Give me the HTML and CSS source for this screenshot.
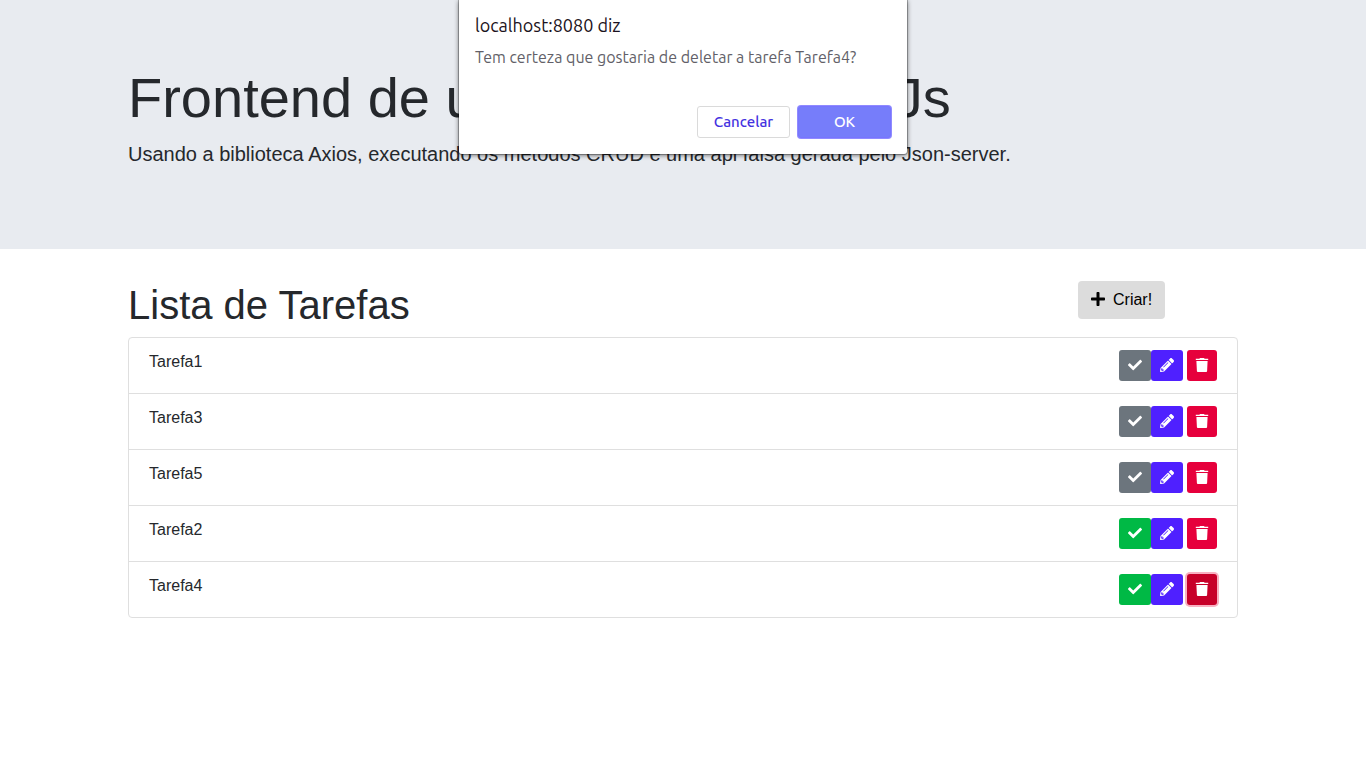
FILE: index.html
```html
<!DOCTYPE html>
<html lang="pt-BR">
<head>
  <meta charset="utf-8">
  <meta name="viewport" content="width=device-width, initial-scale=1">
  <title>Lista de Tarefas</title>
  <link rel="stylesheet" href="styles.css">
</head>
<body>
  <svg class="sprite" aria-hidden="true">
    <symbol id="check" viewBox="0 0 512 512"><path d="M173.898 439.404l-166.4-166.4c-9.997-9.997-9.997-26.206 0-36.204l36.203-36.204c9.997-9.998 26.207-9.998 36.204 0L192 312.69 432.095 72.596c9.997-9.997 26.207-9.997 36.204 0l36.203 36.204c9.997 9.997 9.997 26.206 0 36.204l-294.4 294.401c-9.998 9.997-26.207 9.997-36.204-.001z"/></symbol>
    <symbol id="pencil" viewBox="0 0 512 512"><path d="M497.9 142.1l-46.1 46.1c-4.7 4.7-12.3 4.7-17 0l-111-111c-4.7-4.7-4.7-12.3 0-17l46.1-46.1c18.7-18.7 49.1-18.7 67.9 0l60.1 60.1c18.8 18.7 18.8 49.1 0 67.9zM284.2 99.8L21.6 362.4.4 483.9c-2.9 16.4 11.4 30.6 27.8 27.8l121.5-21.3 262.6-262.6c4.7-4.7 4.7-12.3 0-17l-111-111c-4.8-4.7-12.4-4.7-17.1 0zM124.1 339.9c-5.5-5.5-5.5-14.3 0-19.8l154-154c5.5-5.5 14.3-5.5 19.8 0s5.5 14.3 0 19.8l-154 154c-5.5 5.5-14.3 5.5-19.8 0zM88 424h48v36.3l-64.5 11.3-31.1-31.1L51.7 376H88v48z"/></symbol>
    <symbol id="trash" viewBox="0 0 12 14"><path d="M4 0h4l.6 .8H12.2V2.1H-.2V.8H3.4zM.4 3h11.2l-.5 10a1 1 0 0 1-1 1H1.9a1 1 0 0 1-1-1z"/></symbol>
    <symbol id="plus" viewBox="0 0 448 512"><path d="M416 208H272V64c0-17.67-14.33-32-32-32h-32c-17.67 0-32 14.33-32 32v144H32c-17.67 0-32 14.33-32 32v32c0 17.67 14.33 32 32 32h144v144c0 17.67 14.33 32 32 32h32c17.67 0 32-14.33 32-32V304h144c17.67 0 32-14.33 32-32v-32c0-17.67-14.33-32-32-32z"/></symbol>
  </svg>

  <header class="hero">
    <div class="container">
      <h1 class="hero-title">Frontend de um Crud com VueJs</h1>
      <p class="hero-lead">Usando a biblioteca Axios, executando os métodos CRUD e uma api falsa gerada pelo Json-server.</p>
    </div>
  </header>

  <main class="container">
    <div class="toolbar">
      <h2 class="title">Lista de Tarefas</h2>
      <div>
        <button type="button" class="btn btn-create"><svg class="icon-plus" aria-hidden="true"><use href="#plus"/></svg>Criar!</button>
      </div>
    </div>

    <ul class="tasks">
      <li class="task">
        <span>Tarefa1</span>
        <div class="actions">
          <button type="button" class="btn btn-sm gray" aria-label="Concluir Tarefa1"><svg class="icon"><use href="#check"/></svg></button>
          <button type="button" class="btn btn-sm blue" aria-label="Editar Tarefa1"><svg class="icon"><use href="#pencil"/></svg></button>
          <button type="button" class="btn btn-sm red" aria-label="Deletar Tarefa1"><svg class="icon narrow"><use href="#trash"/></svg></button>
        </div>
      </li>
      <li class="task">
        <span>Tarefa3</span>
        <div class="actions">
          <button type="button" class="btn btn-sm gray" aria-label="Concluir Tarefa3"><svg class="icon"><use href="#check"/></svg></button>
          <button type="button" class="btn btn-sm blue" aria-label="Editar Tarefa3"><svg class="icon"><use href="#pencil"/></svg></button>
          <button type="button" class="btn btn-sm red" aria-label="Deletar Tarefa3"><svg class="icon narrow"><use href="#trash"/></svg></button>
        </div>
      </li>
      <li class="task">
        <span>Tarefa5</span>
        <div class="actions">
          <button type="button" class="btn btn-sm gray" aria-label="Concluir Tarefa5"><svg class="icon"><use href="#check"/></svg></button>
          <button type="button" class="btn btn-sm blue" aria-label="Editar Tarefa5"><svg class="icon"><use href="#pencil"/></svg></button>
          <button type="button" class="btn btn-sm red" aria-label="Deletar Tarefa5"><svg class="icon narrow"><use href="#trash"/></svg></button>
        </div>
      </li>
      <li class="task">
        <span>Tarefa2</span>
        <div class="actions">
          <button type="button" class="btn btn-sm green" aria-label="Reabrir Tarefa2"><svg class="icon"><use href="#check"/></svg></button>
          <button type="button" class="btn btn-sm blue" aria-label="Editar Tarefa2"><svg class="icon"><use href="#pencil"/></svg></button>
          <button type="button" class="btn btn-sm red" aria-label="Deletar Tarefa2"><svg class="icon narrow"><use href="#trash"/></svg></button>
        </div>
      </li>
      <li class="task">
        <span>Tarefa4</span>
        <div class="actions">
          <button type="button" class="btn btn-sm green" aria-label="Reabrir Tarefa4"><svg class="icon"><use href="#check"/></svg></button>
          <button type="button" class="btn btn-sm blue" aria-label="Editar Tarefa4"><svg class="icon"><use href="#pencil"/></svg></button>
          <button type="button" class="btn btn-sm red active" aria-label="Deletar Tarefa4"><svg class="icon narrow"><use href="#trash"/></svg></button>
        </div>
      </li>
    </ul>
  </main>

  <div class="dialog" role="alertdialog" aria-labelledby="dialog-title" aria-describedby="dialog-text">
    <h2 class="dialog-title" id="dialog-title">localhost:8080 diz</h2>
    <p class="dialog-text" id="dialog-text">Tem certeza que gostaria de deletar a tarefa Tarefa4?</p>
    <div class="dialog-actions">
      <button type="button" class="dialog-btn">Cancelar</button>
      <button type="button" class="dialog-btn primary">OK</button>
    </div>
  </div>
</body>
</html>
```
FILE: styles.css
```css
*, *::before, *::after { box-sizing: border-box; }

body {
  margin: 0;
  background: #fff;
  color: #25282c;
  font: 16px/24px "Liberation Sans", Arial, sans-serif;
}

h1, h2, p, ul { margin: 0; padding: 0; font-weight: 400; }

.sprite { display: none; }

.container {
  max-width: 1140px;
  margin: 0 auto;
  padding: 0 15px;
}

.hero { padding: 64px 0 80px; background: #e8ebf0; }
.hero-title { margin-bottom: 8px; font-size: 56px; line-height: 67px; }
.hero-lead { font-size: 20px; line-height: 30px; }

.toolbar {
  display: grid;
  grid-template-columns: 10fr 2fr;
  margin: 32px -15px 8px;
}
.toolbar > * { padding: 0 15px; }
.title { font-size: 40px; line-height: 48px; }

.btn {
  display: flex;
  align-items: center;
  border: 1px solid transparent;
  border-radius: 4px;
  color: #fff;
  font: inherit;
  cursor: pointer;
}
.btn-create { gap: 8px; padding: 6px 12px; background: #dcdcdc; color: #000; }
.icon-plus { width: 14px; height: 16px; margin-bottom: 2px; fill: currentColor; }

.tasks {
  list-style: none;
  border: 1px solid #dfdfdf;
  border-radius: 4px;
}
.task {
  display: flex;
  justify-content: space-between;
  padding: 12px 20px;
}
.task + .task { border-top: 1px solid #dfdfdf; }

.actions { display: flex; }
.btn-sm { height: 31px; padding: 0 8px 1px; border-radius: 3px; }
.icon { display: block; width: 14px; height: 14px; fill: currentColor; }
.narrow { width: 12px; overflow: visible; }
symbol { overflow: visible; }

.gray { background: #6c757d; }
.green { background: #00b945; }
.blue { background: #4f20ff; }
.red { margin-left: 4px; background: #e6003c; }
.red.active { background: #c70029; box-shadow: 0 0 0 2px #f8b0c1; }

.dialog {
  position: absolute;
  top: 0;
  left: 50%;
  width: 448px;
  padding: 12px 16px 16px;
  transform: translateX(-50%);
  border-radius: 0 0 3px 3px;
  background: #fff;
  box-shadow: 0 0 0 1px rgba(0, 0, 0, .25), 0 1px 5px rgba(0, 0, 0, .6);
  font-family: Ubuntu, "Noto Sans", sans-serif;
}
.dialog-title { margin-bottom: 8px; color: #1b1220; font-size: 18px; line-height: 26px; }
.dialog-text { color: #625f68; font-size: 16px; line-height: 22px; }
.dialog-actions { display: flex; justify-content: flex-end; gap: 8px; margin-top: 38px; }
.dialog-btn {
  min-width: 93px;
  height: 32px;
  padding: 0 15px;
  border: 1px solid #dadada;
  border-radius: 3px;
  background: #fff;
  color: #4432df;
  font: 500 15px/20px Ubuntu, "Noto Sans", sans-serif;
  cursor: pointer;
}
.primary { border-color: #7874ff; background: #767dfa; color: #fff; box-shadow: 0 0 0 1px #8f8bff; }
```
